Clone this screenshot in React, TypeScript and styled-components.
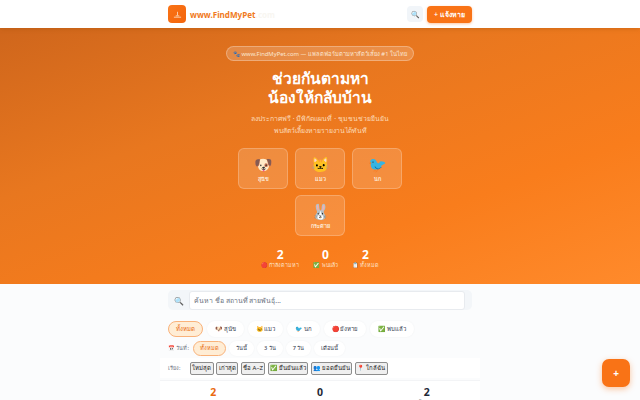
import React from 'react';
import styled, { createGlobalStyle } from 'styled-components';

const GlobalStyle = createGlobalStyle`
    html, body {
        margin: 0;
        padding: 0;
        height: 400px;
        overflow: hidden;
        background: #fbfcfd;
        font-family: "Noto Sans", "Open Sans", "Liberation Sans", sans-serif;
    }
    * { box-sizing: border-box; }
`;

const Page = styled.div`
    height: 400px;
    overflow: hidden;
    position: relative;
`;

const Header = styled.header`
    height: 28px;
    background: #fff;
    display: flex;
    align-items: center;
    justify-content: space-between;
    padding: 0 168px;
    box-shadow: 0 1px 4px rgba(160, 80, 10, 0.35);
    position: relative;
    z-index: 1;
`;

const Brand = styled.div`
    display: flex;
    align-items: center;
    gap: 4px;
`;

const LogoMark = styled.div`
    width: 18px;
    height: 18px;
    border-radius: 4px;
    background: linear-gradient(135deg, #f97316, #f4650c);
    display: flex;
    align-items: center;
    justify-content: center;
`;

const BrandName = styled.span`
    font-size: 8.1px;
    font-weight: 700;
    color: #f07a22;
`;

const BrandFade = styled.span`
    color: #f8f6f1;
`;

const HeaderActions = styled.div`
    display: flex;
    align-items: center;
    gap: 4px;
`;

const SearchIconButton = styled.div`
    width: 16px;
    height: 16px;
    border-radius: 4px;
    background: #f1f5f9;
    font-size: 7px;
    display: flex;
    align-items: center;
    justify-content: center;
`;

const ReportButton = styled.div`
    width: 45px;
    height: 17px;
    border-radius: 4px;
    background: #f97316;
    color: #fff;
    font-size: 7px;
    font-weight: 600;
    display: flex;
    align-items: center;
    justify-content: center;
    box-shadow: 0 1px 3px rgba(249, 115, 22, 0.4);
`;

const Hero = styled.section`
    height: 256px;
    background: linear-gradient(160deg, #cf661c 0%, #e8771f 35%, #f97d1c 70%, #ff8a2b 100%);
    display: flex;
    flex-direction: column;
    align-items: center;
    padding-top: 18px;
    color: #fff;
`;

const HeroBadge = styled.div`
    height: 15px;
    width: 188px;
    border-radius: 8px;
    background: rgba(255, 255, 255, 0.18);
    border: 1px solid rgba(255, 255, 255, 0.28);
    color: #fbe6d2;
    font-size: 5.85px;
    display: flex;
    align-items: center;
    justify-content: center;
    white-space: nowrap;
`;

const HeroTitle = styled.h1`
    margin: 8px 0 0;
    font-size: 15.5px;
    line-height: 19px;
    font-weight: 700;
    text-align: center;
`;

const HeroText = styled.p`
    margin: 6px 0 0;
    font-size: 6.9px;
    line-height: 12px;
    text-align: center;
    color: #fcd9b8;
`;

const PetGrid = styled.div`
    margin-top: 11px;
    width: 164px;
    display: flex;
    flex-wrap: wrap;
    justify-content: center;
    gap: 6px 7px;
`;

const PetCard = styled.div`
    width: 50px;
    height: 41px;
    border-radius: 6px;
    background: rgba(255, 255, 255, 0.15);
    border: 1px solid rgba(255, 255, 255, 0.22);
    display: flex;
    flex-direction: column;
    align-items: center;
    justify-content: center;
    gap: 2px;
`;

const PetEmoji = styled.span`
    font-size: 15px;
    line-height: 18px;
`;

const PetLabel = styled.span`
    font-size: 5.5px;
    line-height: 8px;
    font-weight: 600;
    color: #fde9d6;
`;

const HeroStats = styled.div`
    margin-top: 12px;
    display: flex;
    gap: 14px;
`;

const HeroStat = styled.div`
    display: flex;
    flex-direction: column;
    align-items: center;
`;

const HeroStatValue = styled.span`
    font-size: 12px;
    line-height: 13px;
    font-weight: 700;
`;

const HeroStatLabel = styled.span`
    font-size: 5.4px;
    line-height: 8px;
    color: #fde3ca;
`;

const Content = styled.main`
    width: 320px;
    margin: 0 auto;
    padding-top: 6px;
    display: flex;
    flex-direction: column;
`;

const SearchBar = styled.div`
    height: 20px;
    margin: 0 8px;
    padding: 0 7px 0 6px;
    border-radius: 5px;
    background: #f3f6f9;
    display: flex;
    align-items: center;
    font-size: 8px;
`;

const SearchGlyph = styled.span`
    width: 15px;
`;

const SearchInput = styled.div`
    flex: 1;
    height: 19px;
    border-radius: 3px;
    background: #fff;
    border: 1px solid #e8ebef;
    padding: 0 4px;
    color: #6b7280;
    font-size: 6.9px;
    display: flex;
    align-items: center;
`;

const ChipRow = styled.div<{ $gap: number; $top: number }>`
    margin: ${p => p.$top}px 8px 0;
    height: 16px;
    display: flex;
    align-items: center;
    gap: ${p => p.$gap}px;
`;

const Chip = styled.div<{ $active?: boolean; $small?: boolean }>`
    height: ${p => (p.$small ? 15 : 16)}px;
    padding: 0 ${p => (p.$small ? 6 : 7)}px;
    border-radius: 8px;
    font-size: ${p => (p.$small ? 5.6 : 6)}px;
    font-weight: 500;
    white-space: nowrap;
    display: flex;
    align-items: center;
    color: ${p => (p.$active ? '#ea6a10' : '#374151')};
    background: ${p => (p.$active ? '#ffedd5' : '#fff')};
    border: 1px solid ${p => (p.$active ? '#f9b27a' : 'transparent')};
    box-shadow: ${p => (p.$active ? 'none' : '0 0 2px rgba(0,0,0,0.05)')};
`;

const RowLabel = styled.span<{ $width: number }>`
    width: ${p => p.$width}px;
    font-size: 5.4px;
    color: #6b7280;
    white-space: nowrap;
`;

const SortRow = styled.div`
    margin: 2px 0 0;
    height: 20px;
    padding: 0 8px;
    background: #fff;
    display: flex;
    align-items: center;
    gap: 2.5px;
`;

const SortButton = styled.button`
    height: 13px;
    padding: 0 1.5px;
    margin: 0;
    border: 1px solid #8d8d8d;
    border-radius: 2px;
    background: #efefef;
    color: #222;
    font-family: inherit;
    font-size: 6px;
    white-space: nowrap;
    display: flex;
    align-items: center;
`;

const Summary = styled.div`
    margin-top: 2px;
    border-top: 1px solid #f3f4f6;
    background: #fff;
    display: grid;
    grid-template-columns: repeat(3, 1fr);
    padding-top: 5px;
`;

const SummaryItem = styled.div`
    display: flex;
    flex-direction: column;
    align-items: center;
`;

const SummaryValue = styled.span<{ $color: string }>`
    font-size: 10.5px;
    line-height: 13px;
    font-weight: 700;
    color: ${p => p.$color};
`;

const SummaryLabel = styled.span`
    font-size: 5.5px;
    line-height: 8px;
    color: #6b7280;
`;

const Fab = styled.div`
    position: absolute;
    right: 10px;
    bottom: 13px;
    width: 28px;
    height: 28px;
    border-radius: 7px;
    background: #f97316;
    color: #fff;
    font-size: 10px;
    font-weight: 700;
    display: flex;
    align-items: center;
    justify-content: center;
    box-shadow: 0 2px 6px rgba(249, 115, 22, 0.4);
`;

const pets = [
    { emoji: '🐶', label: 'สุนัข' },
    { emoji: '🐱', label: 'แมว' },
    { emoji: '🐦', label: 'นก' },
    { emoji: '🐰', label: 'กระต่าย' },
];

const heroStats = [
    { value: 2, label: '🔴 กำลังตามหา' },
    { value: 0, label: '✅ พบแล้ว' },
    { value: 2, label: '📋 ทั้งหมด' },
];

const summary = [
    { value: 2, label: 'กำลังตามหา', color: '#ea6a10' },
    { value: 0, label: 'พบแล้ว', color: '#1f2937' },
    { value: 2, label: 'ทั้งหมด', color: '#1f2937' },
];

const typeChips = ['ทั้งหมด', '🐶 สุนัข', '🐱 แมว', '🐦 นก', '🔴 ยังหาย', '✅ พบแล้ว'];
const dateChips = ['ทั้งหมด', 'วันนี้', '3 วัน', '7 วัน', 'เดือนนี้'];
const sorts = ['ใหม่สุด', 'เก่าสุด', 'ชื่อ A–Z', '✅ ยืนยันแล้ว', '👥 ยอดยืนยัน', '📍 ใกล้ฉัน'];

export default function App() {
    return (
        <Page>
            <GlobalStyle />
            <Header>
                <Brand>
                    <LogoMark>
                        <svg width="9" height="9" viewBox="0 0 10 10">
                            <path d="M1 8h8M3 6.5h4M5 2v4" stroke="#fde3ca" strokeWidth="0.9" fill="none" />
                        </svg>
                    </LogoMark>
                    <BrandName>www.FindMyPet<BrandFade>.com</BrandFade></BrandName>
                </Brand>
                <HeaderActions>
                    <SearchIconButton>🔍</SearchIconButton>
                    <ReportButton>+ แจ้งหาย</ReportButton>
                </HeaderActions>
            </Header>
            <Hero>
                <HeroBadge>🐾 www.FindMyPet.com — แพลตฟอร์มตามหาสัตว์เลี้ยง #1 ในไทย</HeroBadge>
                <HeroTitle>ช่วยกันตามหา<br />น้องให้กลับบ้าน</HeroTitle>
                <HeroText>ลงประกาศฟรี · มีพิกัดแผนที่ · ชุมชนช่วยยืนยัน<br />พบสัตว์เลี้ยงหายรายงานได้ทันที</HeroText>
                <PetGrid>
                    {pets.map(pet => (
                        <PetCard key={pet.label}>
                            <PetEmoji>{pet.emoji}</PetEmoji>
                            <PetLabel>{pet.label}</PetLabel>
                        </PetCard>
                    ))}
                </PetGrid>
                <HeroStats>
                    {heroStats.map(stat => (
                        <HeroStat key={stat.label}>
                            <HeroStatValue>{stat.value}</HeroStatValue>
                            <HeroStatLabel>{stat.label}</HeroStatLabel>
                        </HeroStat>
                    ))}
                </HeroStats>
            </Hero>
            <Content>
                <SearchBar>
                    <SearchGlyph>🔍</SearchGlyph>
                    <SearchInput>ค้นหา ชื่อ สถานที่ สายพันธุ์...</SearchInput>
                </SearchBar>
                <ChipRow $gap={4} $top={11}>
                    {typeChips.map((chip, i) => <Chip key={chip} $active={i === 0}>{chip}</Chip>)}
                </ChipRow>
                <ChipRow $gap={3} $top={3}>
                    <RowLabel $width={22}>📅 วันที่:</RowLabel>
                    {dateChips.map((chip, i) => <Chip key={chip} $small $active={i === 0}>{chip}</Chip>)}
                </ChipRow>
                <SortRow>
                    <RowLabel $width={19}>เรียง:</RowLabel>
                    {sorts.map(sort => <SortButton key={sort}>{sort}</SortButton>)}
                </SortRow>
                <Summary>
                    {summary.map(item => (
                        <SummaryItem key={item.label}>
                            <SummaryValue $color={item.color}>{item.value}</SummaryValue>
                            <SummaryLabel>{item.label}</SummaryLabel>
                        </SummaryItem>
                    ))}
                </Summary>
            </Content>
            <Fab>+</Fab>
        </Page>
    );
}
